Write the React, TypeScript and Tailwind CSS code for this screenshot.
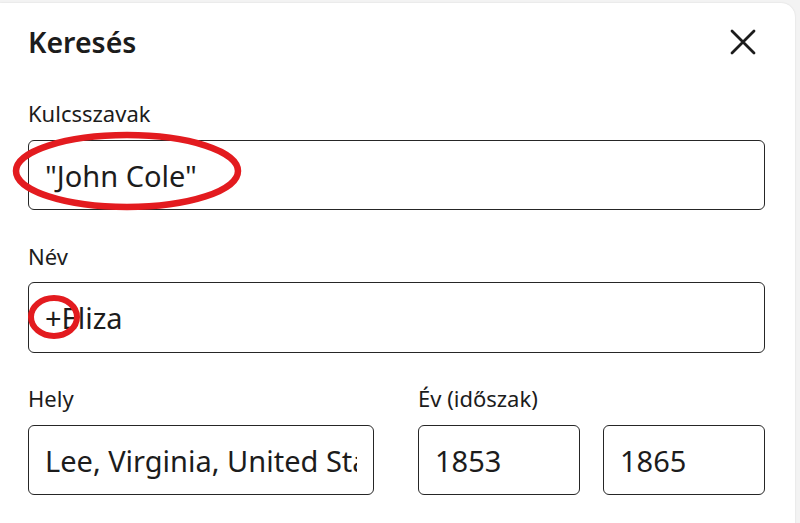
import React from 'react';

const font = { fontFamily: '"Noto Sans", "Open Sans", sans-serif' };

function Field({ label, value, className = '' }: { label?: string; value: string; className?: string }) {
  return (
    <input
      readOnly
      value={value}
      className={`h-[70px] w-full rounded-[6px] border-[1.5px] border-[#262626] bg-white px-4 text-[29px] text-[#1c1c1c] outline-none ${className}`}
      aria-label={label}
    />
  );
}

export default function App() {
  return (
    <div className="relative h-[523px] w-[800px] overflow-hidden bg-[#f3f3f3] pt-[3px] pr-[5px]" style={font}>
      <div className="h-[540px] rounded-tr-[14px] bg-white pl-7 pr-[30px] pt-[21px] shadow-[0_0_2px_rgba(0,0,0,0.12)]">
        {/* header */}
        <div className="flex h-9 items-center justify-between">
          <h2 className="text-[28.5px] font-semibold leading-9 text-[#1c1c1c]">Keresés</h2>
          <button className="mr-[9px] flex h-[26px] w-[26px] items-center justify-center">
            <svg width="26" height="26" viewBox="0 0 26 26" fill="none" stroke="#1c1c1c" strokeWidth="2.8" strokeLinecap="round">
              <path d="M2 2 L24 24 M24 2 L2 24" />
            </svg>
          </button>
        </div>

        <label className="mt-[38px] block text-[22px] leading-[30px] text-[#1c1c1c]">Kulcsszavak</label>
        <div className="mt-[12px]">
          <Field label="Kulcsszavak" value={'"John Cole"'} />
        </div>

        <label className="mt-[31px] block text-[22px] leading-[30px] text-[#1c1c1c]">Név</label>
        <div className="mt-[11px]">
          <Field label="Név" value="+Eliza" className="h-[71px]" />
        </div>

        <div className="mt-[30px] flex gap-[45px]">
          <div className="w-[346px]">
            <label className="block text-[22px] leading-[30px] text-[#1c1c1c]">Hely</label>
            <div className="mt-[12px]">
              <Field label="Hely" value="Lee, Virginia, United States" />
            </div>
          </div>
          <div className="flex-1">
            <label className="-ml-px block text-[22px] leading-[30px] text-[#1c1c1c]">Év (időszak)</label>
            <div className="-ml-px mt-[12px] flex gap-[23px]">
              <Field label="Év kezdete" value="1853" />
              <Field label="Év vége" value="1865" />
            </div>
          </div>
        </div>
      </div>

      {/* red annotation marks */}
      <svg className="pointer-events-none absolute left-0 top-0" width="800" height="523">
        <ellipse cx="127" cy="171" rx="111" ry="36" fill="none" stroke="#e31b1f" strokeWidth="6.5" />
        <ellipse cx="54" cy="317" rx="23" ry="19" fill="none" stroke="#e31b1f" strokeWidth="6" />
      </svg>
    </div>
  );
}
